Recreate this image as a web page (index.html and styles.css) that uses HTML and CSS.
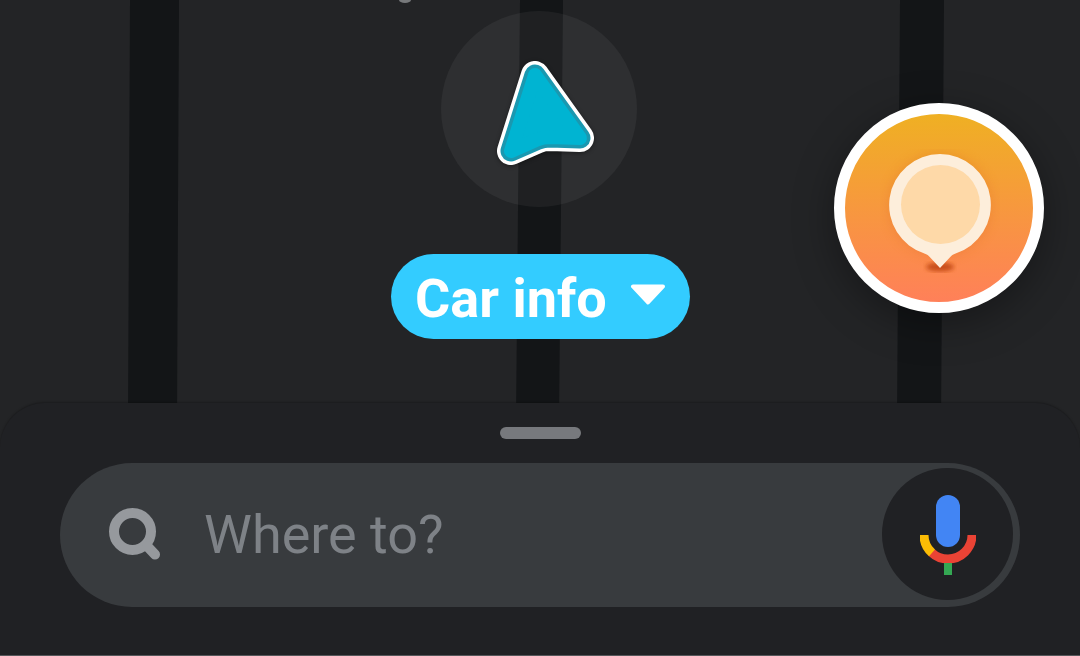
FILE: index.html
```html
<!DOCTYPE html>
<html lang="en">

<head>
    <meta charset="UTF-8">
    <title>Where to?</title>
    <link rel="stylesheet" href="styles.css">
</head>

<body>
    <div class="screen">
        <svg class="map" viewBox="0 0 1080 656">
            <polygon class="road" points="130,0 179,0 177,420 128,420" />
            <polygon class="road" points="520,0 563,0 559,420 516,420" />
            <polygon class="road" points="900,0 944,0 941,420 897,420" />
            <ellipse class="speck" cx="405" cy="0" rx="6" ry="3" />
        </svg>

        <div class="halo"></div>
        <svg class="puck" viewBox="0 0 120 120">
            <path class="puck-edge" d="M47 25L92 88L62 87Q55 87 49 89.500L23 101Z" />
            <path class="puck-rim" d="M47 25L92 88L62 87Q55 87 49 89.500L23 101Z" />
            <path class="puck-fill" d="M47 25L92 88L62 87Q55 87 49 89.500L23 101Z" />
        </svg>

        <button class="pill">
            <span>Car info</span>
            <svg class="caret" viewBox="0 0 36 21">
                <path d="M3 2.500h30L18 18.500z" />
            </svg>
        </button>

        <div class="fab">
            <svg class="pin" viewBox="0 0 120 130">
                <defs>
                    <filter id="blur6"><feGaussianBlur stdDeviation="6" /></filter>
                    <filter id="blur2"><feGaussianBlur stdDeviation="2.2" /></filter>
                </defs>
                <circle cx="60" cy="56" r="52" fill="#d9641f" opacity=".25" filter="url(#blur6)" />
                <ellipse cx="60" cy="118" rx="14" ry="4.500" fill="#c24a14" opacity=".9" filter="url(#blur2)" />
                <path fill="#fdeedb" d="M60 5a51 51 0 0 1 15 99.700q-3 .9-4.500 3.100l-10.500 11.200-10.500-11.200q-1.500-2.200-4.500-3.100A51 51 0 0 1 60 5z" />
                <circle cx="60.500" cy="55.500" r="39.500" fill="#fed9a8" />
            </svg>
        </div>

        <div class="sheet">
            <div class="handle"></div>
            <div class="search">
                <svg class="search-icon" viewBox="0 0 52 52">
                    <circle cx="23.500" cy="23.500" r="18.500" />
                    <line x1="38" y1="38" x2="46" y2="46.500" />
                </svg>
                <span class="placeholder">Where to?</span>
                <div class="mic">
                    <svg class="mic-icon" viewBox="0 0 56 80">
                        <rect x="16" y="0" width="24" height="52" rx="12" fill="#4285f4" />
                        <path d="M52 40a24 24 0 0 1-24 24a24 24 0 0 1-16.500-6.600" fill="none" stroke="#ea4335" stroke-width="9" />
                        <path d="M4 40a24 24 0 0 0 8 17.900" fill="none" stroke="#fbbc05" stroke-width="9" />
                        <rect x="24" y="68" width="8" height="12" fill="#34a853" />
                    </svg>
                </div>
            </div>
        </div>
    </div>
</body>

</html>
```

FILE: styles.css
```css
body {
    margin: 0;
    background: #232426;
    font-family: Roboto, sans-serif;
}

.screen {
    position: relative;
    width: 1080px;
    height: 656px;
    overflow: hidden;
    display: flex;
    flex-direction: column;
    justify-content: flex-end;
}

/* map layer */
.map {
    position: absolute;
    left: 0;
    top: 0;
    width: 1080px;
    height: 656px;
}

.road {
    fill: #131517;
}

.speck {
    fill: #77797b;
}

.halo {
    position: absolute;
    left: 441px;
    top: 11px;
    width: 196px;
    height: 196px;
    border-radius: 50%;
    background: rgba(255, 255, 255, .05);
}

.puck {
    position: absolute;
    left: 488px;
    top: 50px;
    width: 120px;
    height: 120px;
    overflow: visible;
    filter: drop-shadow(0 1px 2px rgba(0, 0, 0, .4));
}

.puck path {
    stroke-linejoin: round;
}

.puck-edge {
    fill: #fff;
    stroke: #fff;
    stroke-width: 28px;
}

.puck-rim {
    fill: #1a98b0;
    stroke: #1a98b0;
    stroke-width: 21px;
}

.puck-fill {
    fill: #00b4d2;
    stroke: #00b4d2;
    stroke-width: 14px;
}

.pill {
    position: absolute;
    left: 391px;
    top: 254px;
    width: 299px;
    height: 85px;
    padding: 3px 24px 0 24px;
    border: 0;
    border-radius: 43px;
    background: #33ccff;
    color: #fff;
    font-family: Roboto, sans-serif;
    font-size: 54px;
    font-weight: 700;
    display: flex;
    align-items: center;
    justify-content: space-between;
}

.caret {
    width: 36px;
    height: 21px;
    margin-top: -7px;
}

.caret path {
    fill: #fff;
    stroke: #fff;
    stroke-width: 4px;
    stroke-linejoin: round;
}

.fab {
    position: absolute;
    left: 834px;
    top: 103px;
    width: 188px;
    height: 188px;
    border: 11px solid #fff;
    border-radius: 50%;
    background: linear-gradient(#efb023, #ff8059);
    box-shadow: 0 10px 40px rgba(0, 0, 0, .35);
    display: flex;
    justify-content: center;
}

.pin {
    width: 120px;
    height: 130px;
    margin: 35px 0 0 2px;
}

/* bottom sheet */
.sheet {
    position: relative;
    height: 253px;
    box-sizing: border-box;
    padding: 24px 60px 0;
    border-bottom: 1px solid #55575a;
    border-radius: 45px 45px 0 0;
    background: #202124;
    box-shadow: 0 -1px 2px rgba(0, 0, 0, .25);
}

.handle {
    width: 81px;
    height: 12px;
    margin: 0 auto 24px;
    border-radius: 6px;
    background: #77797d;
}

.search {
    height: 144px;
    box-sizing: border-box;
    padding: 5px 7px 7px 49px;
    border-radius: 72px;
    background: #383b3e;
    display: flex;
    align-items: center;
}

.search-icon {
    width: 52px;
    height: 52px;
    flex: none;
}

.search-icon circle,
.search-icon line {
    fill: none;
    stroke: #96999d;
    stroke-width: 10px;
    stroke-linecap: round;
}

.placeholder {
    flex: 1;
    margin-left: 43px;
    color: #7e8287;
    font-size: 54px;
}

.mic {
    width: 131px;
    height: 132px;
    flex: none;
    border-radius: 50%;
    background: #202124;
    display: flex;
    align-items: center;
    justify-content: center;
}

.mic-icon {
    width: 56px;
    height: 80px;
    margin-top: 1px;
}
```
